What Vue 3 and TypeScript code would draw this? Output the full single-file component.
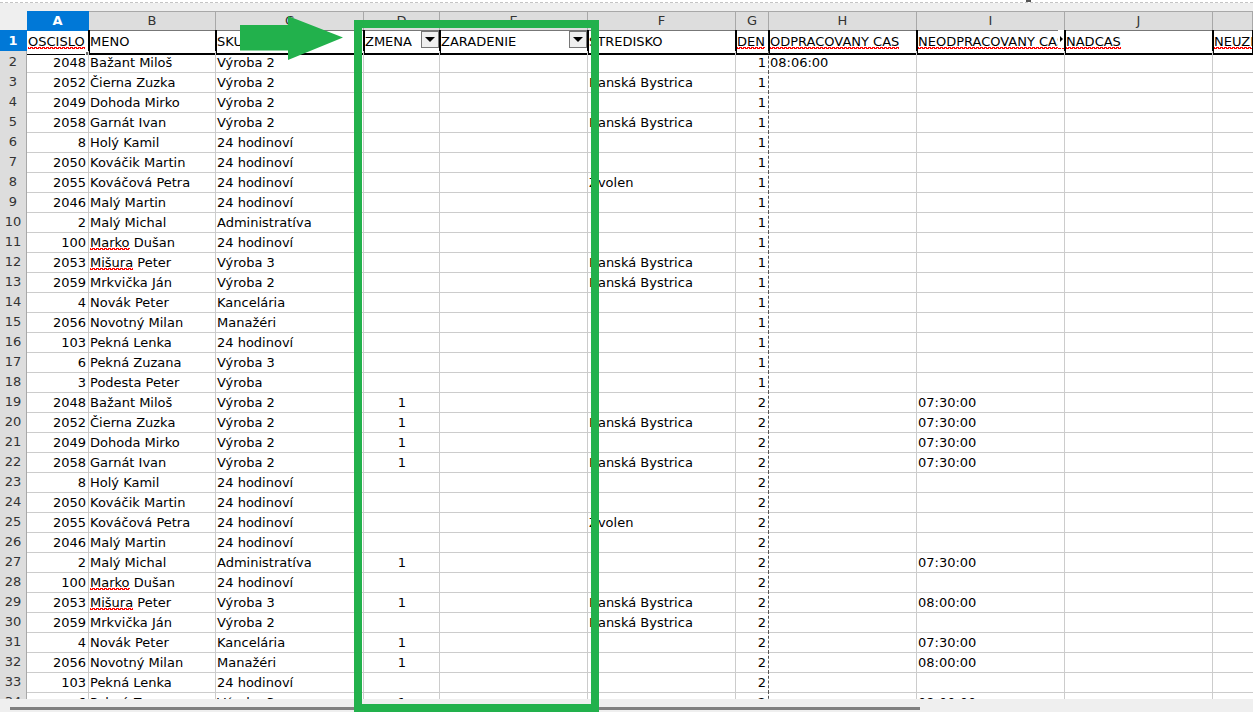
<script setup lang="ts">
interface Person {
  id: number
  name: string
  // first word gets the spellcheck underline
  misspelled?: boolean
  group: string
  centre?: string
}

interface Row {
  person: Person
  shift?: string
  day: string
  worked?: string
  missed?: string
}

const BB = 'Banská Bystrica'

const people: Person[] = [
  { id: 2048, name: 'Bažant Miloš', group: 'Výroba 2' },
  { id: 2052, name: 'Čierna Zuzka', group: 'Výroba 2', centre: BB },
  { id: 2049, name: 'Dohoda Mirko', group: 'Výroba 2' },
  { id: 2058, name: 'Garnát Ivan', group: 'Výroba 2', centre: BB },
  { id: 8, name: 'Holý Kamil', group: '24 hodinoví' },
  { id: 2050, name: 'Kováčik Martin', group: '24 hodinoví' },
  { id: 2055, name: 'Kováčová Petra', group: '24 hodinoví', centre: 'Zvolen' },
  { id: 2046, name: 'Malý Martin', group: '24 hodinoví' },
  { id: 2, name: 'Malý Michal', group: 'Administratíva' },
  { id: 100, name: 'Marko Dušan', misspelled: true, group: '24 hodinoví' },
  { id: 2053, name: 'Mišura Peter', misspelled: true, group: 'Výroba 3', centre: BB },
  { id: 2059, name: 'Mrkvička Ján', group: 'Výroba 2', centre: BB },
  { id: 4, name: 'Novák Peter', group: 'Kancelária' },
  { id: 2056, name: 'Novotný Milan', group: 'Manažéri' },
  { id: 103, name: 'Pekná Lenka', group: '24 hodinoví' },
  { id: 6, name: 'Pekná Zuzana', group: 'Výroba 3' },
  { id: 3, name: 'Podesta Peter', group: 'Výroba' }
]

// second day: missed hours per employee id
const missedDay2: Record<number, string> = {
  2048: '07:30:00',
  2052: '07:30:00',
  2049: '07:30:00',
  2058: '07:30:00',
  2: '07:30:00',
  2053: '08:00:00',
  4: '07:30:00',
  2056: '08:00:00',
  6: '08:00:00'
}

const rows: Row[] = [
  ...people.map((person, i): Row => ({
    person,
    day: '1',
    worked: i === 0 ? '08:06:00' : undefined
  })),
  ...people.slice(0, 16).map((person): Row => ({
    person,
    day: '2',
    shift: missedDay2[person.id] ? '1' : undefined,
    missed: missedDay2[person.id]
  }))
]

const columns = ['A', 'B', 'C', 'D', 'E', 'F', 'G', 'H', 'I', 'J', '']

const firstWord = (name: string) => name.split(' ')[0]
const restOfName = (name: string) => name.slice(name.indexOf(' '))
</script>

<template>
  <div class="app">
    <div class="toolbar-edge">
      <div class="toolbar-line"></div>
      <div class="toolbar-strip"></div>
    </div>

    <div class="sheet">
      <div class="row col-heads">
        <div class="corner"></div>
        <div
          v-for="(col, i) in columns"
          :key="i"
          :class="['col-head', { 'col-head--active': col === 'A' }]"
        >{{ col }}</div>
      </div>

      <div class="row row-first">
        <div class="row-head row-head--active">1</div>
        <div class="cell head cell-cursor"><span class="typo">OSCISLO</span><i class="cursor-handle"></i></div>
        <div class="cell head">MENO</div>
        <div class="cell head">SKUPINA</div>
        <div class="cell head">ZMENA<span class="filter"><i></i></span></div>
        <div class="cell head">ZARADENIE<span class="filter"><i></i></span></div>
        <div class="cell head">STREDISKO</div>
        <div class="cell head"><span class="typo">DEN</span></div>
        <div class="cell head"><span class="typo">ODPRACOVANY CAS</span></div>
        <div class="cell head"><span class="typo">NEODPRACOVANY CAS</span><span class="overflow-mark"><i></i></span></div>
        <div class="cell head"><span class="typo">NADCAS</span></div>
        <div class="cell head"><span class="typo">NEUZNANY</span></div>
      </div>

      <div v-for="(row, i) in rows" :key="i" class="row">
        <div class="row-head">{{ i + 2 }}</div>
        <div class="cell num">{{ row.person.id }}</div>
        <div class="cell">
          <template v-if="row.person.misspelled">
            <span class="typo">{{ firstWord(row.person.name) }}</span>{{ restOfName(row.person.name) }}
          </template>
          <template v-else>{{ row.person.name }}</template>
        </div>
        <div class="cell">{{ row.person.group }}</div>
        <div class="cell mid">{{ row.shift }}</div>
        <div class="cell"></div>
        <div class="cell">{{ row.person.centre }}</div>
        <div class="cell num page-break">{{ row.day }}</div>
        <div class="cell">{{ row.worked }}</div>
        <div class="cell">{{ row.missed }}</div>
        <div class="cell"></div>
        <div class="cell cell-last"></div>
      </div>
    </div>

    <div class="scrollbar">
      <div class="scrollbar-thumb"></div>
    </div>

    <!-- annotations painted over the screenshot -->
    <svg class="arrow" viewBox="0 0 104 44" xmlns="http://www.w3.org/2000/svg">
      <path d="M0 9H48V0L103 21.5L48 44V34.5H0Z" fill="#22b14c" />
    </svg>
    <div class="frame"></div>
    <i class="top-blob"></i>
  </div>
</template>

<style scoped>
.app {
  position: relative;
  width: 1258px;
  height: 712px;
  padding-right: 5px;
  box-sizing: border-box;
  display: flex;
  flex-direction: column;
  overflow: hidden;
  background: #fff;
  font-family: "DejaVu Sans", sans-serif;
  font-size: 13px;
  color: #000;
}

.toolbar-edge {
  height: 11px;
  flex-shrink: 0;
  display: flex;
  flex-direction: column;
}

.toolbar-line {
  height: 3px;
  box-sizing: border-box;
  border-bottom: 1px dashed #c4c4c4;
}

.toolbar-strip {
  flex: 1;
  background: #efefef;
}

.sheet {
  flex: 1;
  min-height: 0;
  overflow: hidden;
}

.row {
  display: grid;
  grid-template-columns: 27px 62px 127px 148px 76px 148px 148px 33px 148px 148px 148px 40px;
  height: 20px;
}

.col-heads {
  height: 19px;
}

.corner {
  background: #efefef;
}

.col-head {
  box-sizing: border-box;
  background: #dddddd;
  border-top: 1px solid #a8a8a8;
  border-right: 1px solid #a8a8a8;
  border-bottom: 1px solid #777;
  text-align: center;
  line-height: 18px;
  color: #333;
}

.col-head--active {
  background: #0078d7;
  border-color: #0078d7;
  color: #fff;
  font-weight: 700;
}

.row-head {
  box-sizing: border-box;
  background: #dddddd;
  border-right: 1px solid #a8a8a8;
  border-bottom: 1px solid #b4b4b4;
  text-align: center;
  line-height: 21px;
  color: #333;
}

.row-head--active {
  background: #0078d7;
  border-color: #0078d7;
  color: #fff;
  font-weight: 700;
  line-height: 21px;
}

.cell {
  position: relative;
  box-sizing: border-box;
  padding: 0 0 0 1px;
  border-right: 1px solid #cccccc;
  border-bottom: 1px solid #cccccc;
  line-height: 23px;
  white-space: nowrap;
  overflow: hidden;
}

.cell-last {
  border-right: 0;
}

.num {
  padding: 0 2px 0 0;
  text-align: right;
}

.mid {
  text-align: center;
}

.page-break {
  border-right: 1px dashed #555;
}

.row-first {
  height: 21px;
}

.head {
  border-left: 1px solid #000;
  border-right: 1px solid #000;
  border-bottom: 2px solid #000;
  padding-left: 0;
  line-height: 24px;
}

.cell-cursor {
  overflow: visible;
  border-left: 0;
  border-bottom-width: 1px;
  padding-left: 1px;
}

.cursor-handle {
  position: absolute;
  right: -2px;
  bottom: -1px;
  width: 5px;
  height: 4px;
  background: #666;
  border-left: 1px solid #fff;
  border-top: 1px solid #fff;
  box-sizing: border-box;
}

/* spellcheck squiggle, tighter to the baseline than text-decoration wavy */
.typo {
  background-image:
    linear-gradient(135deg, transparent 40%, #f00 40%, #f00 75%, transparent 75%),
    linear-gradient(45deg, transparent 40%, #f00 40%, #f00 75%, transparent 75%);
  background-size: 4px 2px;
  background-position: 0 100%, 2px 100%;
  background-repeat: repeat-x;
}

.filter {
  position: absolute;
  top: 1px;
  right: 0;
  width: 18px;
  height: 17px;
  box-sizing: border-box;
  background: #efefef;
  border: 1px solid #777;
  display: flex;
  align-items: center;
  justify-content: center;
}

.filter i {
  width: 0;
  height: 0;
  border-left: 5px solid transparent;
  border-right: 5px solid transparent;
  border-top: 5px solid #000;
}

.overflow-mark {
  position: absolute;
  top: 0;
  right: 0;
  width: 6px;
  height: 18px;
  background: #fff;
  display: flex;
  align-items: center;
  justify-content: flex-end;
}

.overflow-mark i {
  width: 0;
  height: 0;
  margin-right: 1px;
  border-top: 3px solid transparent;
  border-bottom: 3px solid transparent;
  border-left: 3px solid #000;
}

.scrollbar {
  height: 13px;
  flex-shrink: 0;
  background: #efefef;
  position: relative;
}

.scrollbar-thumb {
  position: absolute;
  left: 10px;
  top: 8px;
  width: 910px;
  height: 3px;
  background: #808080;
}

.arrow {
  position: absolute;
  left: 240px;
  top: 16px;
  width: 104px;
  height: 44px;
}

.frame {
  position: absolute;
  left: 354px;
  top: 20px;
  width: 245px;
  height: 692px;
  box-sizing: border-box;
  border: 8px solid #22b14c;
}

.top-blob {
  position: absolute;
  left: 1026px;
  top: 0;
  width: 5px;
  height: 2px;
  background: #555;
}
</style>

<style>
html,
body {
  margin: 0;
  background: #fff;
}
</style>
